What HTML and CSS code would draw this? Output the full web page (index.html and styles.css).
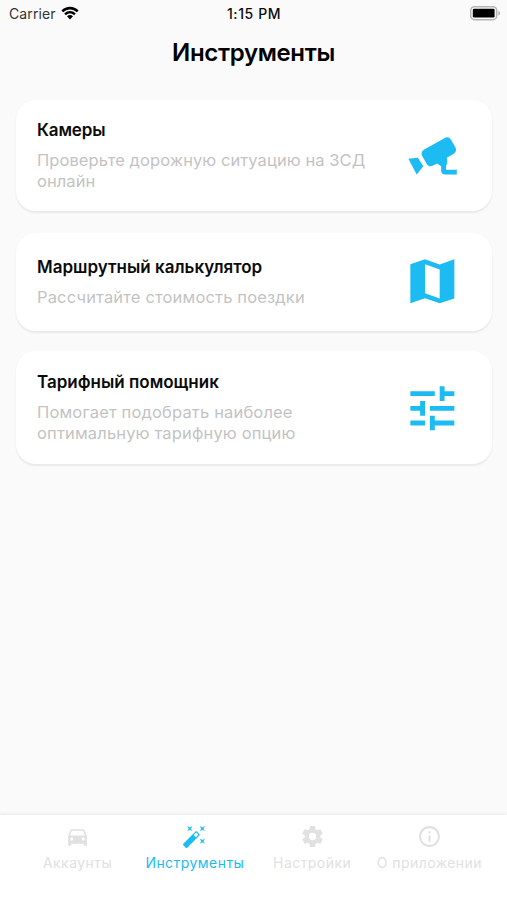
FILE: index.html
```html
<!DOCTYPE html>
<html lang="ru">
<head>
<meta charset="utf-8">
<title>Инструменты</title>
<link rel="stylesheet" href="styles.css">
</head>
<body>
<div class="app">
  <header class="status">
    <div class="carrier"><span>Carrier</span>
      <svg class="wifi" viewBox="0 0 18 14"><path d="M.4 4.6C5.2-.4 12.8-.4 17.6 4.6L15.9 6.3C12 2.400 6 2.400 2.100 6.300ZM3.200 7.500C6.500 4.200 11.500 4.200 14.800 7.500L13.100 9.200C10.700 6.900 7.300 6.900 4.900 9.200ZM6 10.300C7.700 8.700 10.300 8.700 12 10.300L9 13.500Z"/></svg>
    </div>
    <span class="clock">1:15 PM</span>
    <svg class="battery" viewBox="0 0 31 15"><rect x=".7" y=".7" width="26" height="13" rx="3.800" fill="#fafafa" stroke="#b5b5b5" stroke-width="1.500"/><rect x="2.800" y="2.800" width="21.800" height="8.800" rx="1.300"/><path d="M28.300 5C30.800 6 30.800 8.500 28.300 9.500Z" fill="#b5b5b5"/></svg>
  </header>
  <h1 class="title">Инструменты</h1>
  <main class="cards">
    <section class="card card-cameras">
      <div class="copy"><h2>Камеры</h2><p class="tight">Проверьте дорожную ситуацию на ЗСД<br>онлайн</p></div>
      <svg class="icon" viewBox="0 0 24 24"><path d="M17.100 4.900L8.500 9.700C7.600 10.300 7.300 11.400 7.900 12.400L9.700 15.500C10.300 16.500 11.300 16.800 12.300 16.200L14 15.300L15.600 16.500V18.200C15.600 19.200 16.200 19.850 17.200 19.850H22V17.850H17.600V16.300C18.100 15.600 18.300 14.500 17.900 13L20.800 11.300C21.700 10.700 22 9.700 21.400 8.700L19.700 5.700C19.100 4.700 18.100 4.300 17.100 4.900M6.100 13L2.200 13.400L5.600 19.800L8.300 16.500Z"/></svg>
    </section>
    <section class="card card-route">
      <div class="copy"><h2>Маршрутный калькулятор</h2><p>Рассчитайте стоимость поездки</p></div>
      <svg class="icon" viewBox="0 0 24 24"><path d="M21 3L15 5.100 9 3 3 5V21L9 18.900l6 2.100 6-2.020V3zM15 19l-6-2.110V5l6 2.110V19z"/></svg>
    </section>
    <section class="card card-tariff">
      <div class="copy"><h2>Тарифный помощник</h2><p>Помогает подобрать наиболее<br>оптимальную тарифную опцию</p></div>
      <svg class="icon" viewBox="0 0 24 24"><path d="M3 17v2h6v-2H3zM3 5v2h10V5H3zm10 16v-2h8v-2h-8v-2h-2v6h2zM7 9v2H3v2h4v2h2V9H7zm14 4v-2H11v2h10zm-6-4h2V7h4V5h-4V3h-2v6z"/></svg>
    </section>
  </main>
  <nav class="tabs">
    <a class="tab"><svg viewBox="0 0 24 24"><path d="M18.920 6.010C18.720 5.420 18.160 5 17.500 5h-11c-.660 0-1.210.420-1.420 1.010L3 12v8c0 .550.450 1 1 1h1c.550 0 1-.450 1-1v-1h12v1c0 .550.450 1 1 1h1c.550 0 1-.450 1-1v-8l-2.080-5.990zM6.500 16c-.830 0-1.500-.670-1.500-1.500S5.670 13 6.500 13s1.500.670 1.500 1.500S7.330 16 6.500 16zm11 0c-.830 0-1.500-.670-1.500-1.500s.670-1.500 1.500-1.500 1.500.670 1.500 1.500-.670 1.500-1.500 1.500zM5 11l1.500-4.500h11L19 11H5z"/></svg><span>Аккаунты</span></a>
    <a class="tab active"><svg viewBox="0 0 24 24"><path d="M7.500 5.600L10 7 8.600 4.500 10 2 7.500 3.400 5 2l1.400 2.500L5 7zm12 9.800L17 14l1.400 2.500L17 19l2.500-1.400L22 19l-1.400-2.500L22 14zM22 2l-2.500 1.400L17 2l1.400 2.500L17 7l2.500-1.400L22 7l-1.400-2.500zm-7.630 5.290c-.390-.390-1.020-.390-1.410 0L1.290 18.960c-.390.390-.390 1.020 0 1.410l2.340 2.340c.390.390 1.020.390 1.410 0L16.700 11.050c.390-.390.390-1.020 0-1.410l-2.330-2.350zm-1.030 5.490l-2.120-2.120 2.440-2.440 2.120 2.120-2.440 2.440z"/></svg><span>Инструменты</span></a>
    <a class="tab"><svg viewBox="0 0 24 24"><path d="M12 15.500A3.500 3.500 0 0 1 8.500 12 3.500 3.500 0 0 1 12 8.500a3.500 3.500 0 0 1 3.500 3.500 3.500 3.500 0 0 1-3.500 3.500m7.430-2.530c.040-.320.070-.640.070-.970s-.030-.660-.070-1l2.110-1.630c.190-.150.240-.420.120-.640l-2-3.460c-.120-.220-.390-.310-.610-.220l-2.490 1c-.520-.390-1.060-.730-1.690-.980l-.370-2.650A.506.506 0 0 0 14 2h-4c-.250 0-.460.180-.500.420l-.370 2.650c-.630.250-1.170.590-1.690.980l-2.490-1c-.220-.090-.490 0-.610.220l-2 3.460c-.130.220-.070.490.120.640L4.570 11c-.040.340-.070.670-.070 1s.030.650.070.970l-2.110 1.660c-.190.150-.250.420-.120.640l2 3.460c.120.220.390.300.610.220l2.490-1.010c.520.400 1.060.740 1.690.990l.370 2.650c.040.240.250.420.500.420h4c.250 0 .460-.180.500-.420l.370-2.650c.630-.260 1.170-.590 1.690-.990l2.490 1.010c.220.080.490 0 .610-.220l2-3.460c.120-.220.070-.490-.120-.640z"/></svg><span>Настройки</span></a>
    <a class="tab"><svg viewBox="0 0 24 24"><path d="M11 7h2v2h-2zm0 4h2v6h-2zm1-9C6.480 2 2 6.480 2 12s4.480 10 10 10 10-4.480 10-10S17.520 2 12 2zm0 18c-4.410 0-8-3.590-8-8s3.590-8 8-8 8 3.590 8 8-3.590 8-8 8z"/></svg><span>О приложении</span></a>
  </nav>
</div>
</body>
</html>
```
FILE: styles.css
```css
* { box-sizing: border-box; }
body { margin: 0; background: #fafafa; font-family: Inter, "Liberation Sans", sans-serif; color: #0b0b0b; }
.app { display: flex; flex-direction: column; height: 900px; overflow: hidden; }
.status { display: grid; grid-template-columns: 1fr auto 1fr; align-items: center; height: 27px; padding: 0 6px 0 9px; font-size: 14px; }
.carrier { display: flex; align-items: center; gap: 5.500px; color: #333; letter-spacing: .1px; }
.wifi { width: 18px; height: 14px; fill: #000; margin-top: -2px; }
.clock { font-weight: 500; font-size: 14px; letter-spacing: .6px; margin-right: 2px; }
.battery { width: 31px; height: 15px; justify-self: end; }
.title { margin: 0; height: 73px; padding-top: 10px; text-align: center; font-size: 24px; line-height: 32px; font-weight: 600; letter-spacing: -.35px; color: #000; }
.cards { display: flex; flex-direction: column; flex: 1; padding: 0 15px 0 16px; }
.card { display: flex; align-items: center; justify-content: space-between; padding: 0 30px 0 21px; background: #fff; border-radius: 20px; box-shadow: 0 1.500px 2px rgba(0,0,0,.07); }
.card-cameras { height: 111px; margin-bottom: 22px; }
.card-route { height: 98px; margin-bottom: 20px; }
.card-tariff { height: 113px; padding-top: 1px; }
.card h2 { margin: 0 0 9px; font-size: 17px; line-height: 21px; font-weight: 600; }
.card-cameras h2 { letter-spacing: -.15px; }
.card p { margin: 0; font-size: 16.500px; line-height: 21px; letter-spacing: .16px; color: #c3c3c3; white-space: nowrap; }
.card .tight { letter-spacing: .07px; }
.icon { width: 58.700px; height: 58.700px; fill: #1cbcf2; flex: none; }
.card-route .icon { margin-top: -2px; }
.tabs { display: grid; grid-template-columns: repeat(4, 1fr); height: 85px; padding: 9px 19px 0; background: #fff; box-shadow: 0 -1px 3px rgba(0,0,0,.08); }
.tab { display: flex; flex-direction: column; align-items: center; font-size: 14px; line-height: 18px; letter-spacing: .45px; color: #e1e1e1; white-space: nowrap; }
.tab svg { width: 25px; height: 25px; margin-bottom: 5px; fill: currentColor; }
.tab.active { color: #1cbcf2; }
```
